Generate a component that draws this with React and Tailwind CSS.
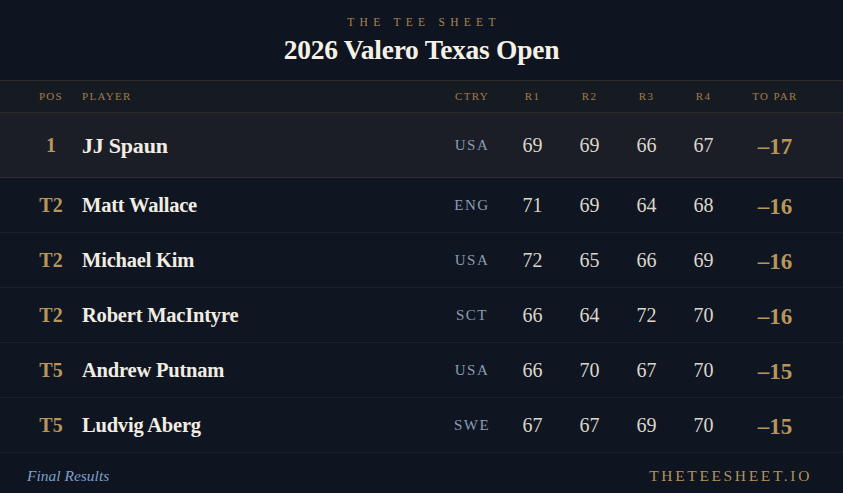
import React from "react";

const players = [
  { pos: "1", name: "JJ Spaun", ctry: "USA", rounds: [69, 69, 66, 67], toPar: "–17", leader: true },
  { pos: "T2", name: "Matt Wallace", ctry: "ENG", rounds: [71, 69, 64, 68], toPar: "–16" },
  { pos: "T2", name: "Michael Kim", ctry: "USA", rounds: [72, 65, 66, 69], toPar: "–16" },
  { pos: "T2", name: "Robert MacIntyre", ctry: "SCT", rounds: [66, 64, 72, 70], toPar: "–16" },
  { pos: "T5", name: "Andrew Putnam", ctry: "USA", rounds: [66, 70, 67, 70], toPar: "–15" },
  { pos: "T5", name: "Ludvig Aberg", ctry: "SWE", rounds: [67, 67, 69, 70], toPar: "–15" },
];

const cols = "grid grid-cols-[62px_1fr_64px_57px_57px_57px_57px_86px] items-center pl-[20px] pr-[25px]";

export default function App() {
  return (
    <div className="w-[843px] h-[493px] bg-[#0e1420] flex flex-col font-['Liberation_Serif',serif] overflow-hidden">
      {/* Title */}
      <div className="h-[80px] flex flex-col items-center pt-[17px]">
        <div className="text-[11.5px] tracking-[0.46em] text-[#a98550] leading-none pl-[5px]">THE TEE SHEET</div>
        <h1 className="mt-[7px] text-[27.5px] font-bold text-[#f6f1e6] leading-none tracking-[-0.01em]">
          2026 Valero Texas Open
        </h1>
      </div>

      {/* Header */}
      <div className={`${cols} h-[33px] bg-[#161b22] border-y border-[#2c2b2a] text-[11px] tracking-[0.12em] text-[#a07c4c]`}>
        <div className="text-center">POS</div>
        <div>PLAYER</div>
        <div className="text-center">CTRY</div>
        <div className="text-center">R1</div>
        <div className="text-center">R2</div>
        <div className="text-center">R3</div>
        <div className="text-center">R4</div>
        <div className="text-center">TO PAR</div>
      </div>

      {/* Rows */}
      {players.map((p, i) => (
        <div
          key={i}
          className={`${cols} border-b ${
            p.leader ? "h-[65px] bg-[#1b1e26] border-[#2a2c31]" : "h-[55px] bg-[#0f1622] border-[#1b222c]"
          }`}
        >
          <div className="text-center font-bold text-[20px] text-[#b8955a]">{p.pos}</div>
          <div className={`font-bold text-[#f2ede2] tracking-[-0.01em] ${p.leader ? "text-[22px]" : "text-[20.5px]"}`}>
            {p.name}
          </div>
          <div className="text-center text-[15px] tracking-[0.1em] text-[#8c9cb0]">{p.ctry}</div>
          {p.rounds.map((r, j) => (
            <div key={j} className="text-center text-[20px] text-[#dcd6cb]">
              {r}
            </div>
          ))}
          <div className="text-center text-[23px] font-bold text-[#b8955a] pt-[4px]">{p.toPar}</div>
        </div>
      ))}

      {/* Footer */}
      <div className="flex-1 flex items-center justify-between pl-[27px] pr-[31px] pt-[5px]">
        <div className="italic text-[15.5px] text-[#7f9fc8]">Final Results</div>
        <div className="text-[15.5px] tracking-[0.17em] text-[#b3925a]">THETEESHEET.IO</div>
      </div>
    </div>
  );
}
